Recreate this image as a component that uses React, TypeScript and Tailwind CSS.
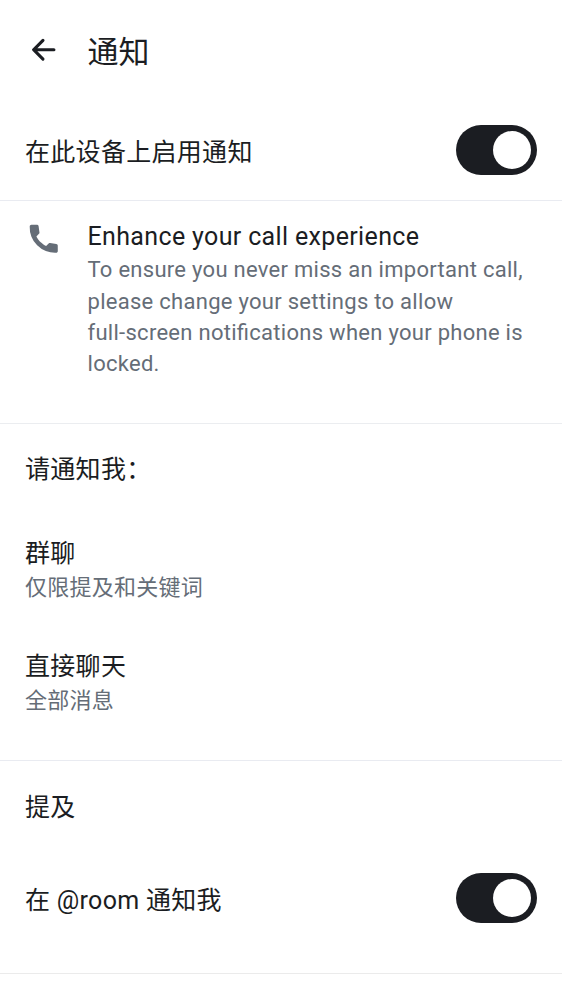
import type { ReactNode } from "react";

function Toggle() {
  return (
    <button role="switch" aria-checked="true" className="flex h-[50px] w-[81px] shrink-0 items-center justify-end rounded-full bg-[#1b1d22] pr-1.5">
      <span className="size-[38px] rounded-full bg-white" />
    </button>
  );
}

function Row({ title, sub }: { title: string; sub: string }) {
  return (
    <div className="flex h-[113px] flex-col px-[25px] pt-[21px]">
      <div className="text-[25px] leading-[38px] tracking-[0.3px]">{title}</div>
      <div className="-mt-[0.5px] text-[22px] leading-[30px] tracking-[0.25px] text-[#656d77]">{sub}</div>
    </div>
  );
}

function Line({ children }: { children: ReactNode }) {
  return <span className="block whitespace-nowrap">{children}</span>;
}

export default function App() {
  return (
    <div className="h-[1000px] w-[562px] overflow-hidden bg-white font-[Roboto,'Noto_Sans_CJK_SC',sans-serif] text-[#1b1d22]">
      <header className="flex h-[100px] items-center pl-[25px]">
        <svg viewBox="0 0 24 24" className="size-[37.5px]" fill="currentColor">
          <path d="M12.207 5.293a1 1 0 0 1 0 1.414L7.914 11H18.5a1 1 0 1 1 0 2H7.914l4.293 4.293a1 1 0 0 1-1.414 1.414l-6-6a1 1 0 0 1 0-1.414l6-6a1 1 0 0 1 1.414 0" />
        </svg>
        <h1 className="ml-[25px] pt-[6px] text-[31px] leading-[40px]">通知</h1>
      </header>
      <section className="flex h-[101px] items-center justify-between border-b border-[#e9ebf1] px-[25px]">
        <span className="pt-[6px] text-[25px] tracking-[0.3px]">在此设备上启用通知</span>
        <Toggle />
      </section>
      <section className="flex h-[223px] border-b border-[#ebedf0] pl-[25px] pt-[18px]">
        <svg viewBox="0 0 24 24" className="mt-[0.5px] size-[37.5px] text-[#656d77]" fill="currentColor">
          <path d="m20.958 16.374.039 3.527q0 .427-.33.756-.33.33-.756.33a16 16 0 0 1-6.57-1.105 16.2 16.2 0 0 1-5.563-3.663 16.1 16.1 0 0 1-3.653-5.573 16.3 16.3 0 0 1-1.115-6.56q0-.427.33-.757T4.095 3l3.528.039a1.07 1.07 0 0 1 1.085.93l.543 3.954q.039.271-.039.504a1.1 1.1 0 0 1-.271.426l-1.64 1.64q.505 1.008 1.154 1.909c.433.6 1.444 1.696 1.444 1.696s1.095 1.01 1.696 1.444q.9.65 1.909 1.153l1.64-1.64q.193-.193.426-.27t.504-.04l3.954.543q.406.059.668.359t.262.727" />
        </svg>
        <div className="ml-[25px]">
          <h2 className="text-[25px] leading-[36px] tracking-[0.35px]">Enhance your call experience</h2>
          <p className="-mt-[0.6px] text-[22px] leading-[31.2px] tracking-[0.28px] text-[#656d77] [font-feature-settings:'liga']">
            <Line>To ensure you never miss an important call,</Line>
            <Line>please change your settings to allow</Line>
            <Line>full-screen notifications when your phone is</Line>
            <Line>locked.</Line>
          </p>
        </div>
      </section>
      <section className="h-[337px] border-b border-[#e9ebf1]">
        <h2 className="h-[90px] px-[25px] pt-[26px] text-[25px] leading-[40px] tracking-[0.3px]">请通知我：</h2>
        <Row title="群聊" sub="仅限提及和关键词" />
        <Row title="直接聊天" sub="全部消息" />
      </section>
      <section className="h-[213px] border-b border-[#ebebeb]">
        <h2 className="h-[87px] px-[25px] pt-[27px] text-[25px] leading-[40px] tracking-[0.3px]">提及</h2>
        <div className="flex h-[100px] items-center justify-between px-[25px]">
          <span className="pt-[6px] text-[25px] tracking-[0.3px]">在 @room 通知我</span>
          <Toggle />
        </div>
      </section>
    </div>
  );
}
